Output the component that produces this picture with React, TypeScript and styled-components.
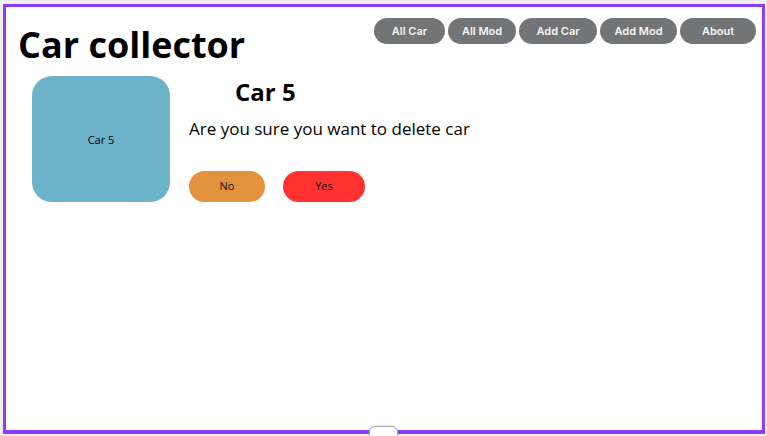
import React from "react";
import styled, { createGlobalStyle } from "styled-components";

const GlobalStyle = createGlobalStyle`
  *, *::before, *::after { box-sizing: border-box; }
  body {
    margin: 0;
    background: #f0f0f3;
    font-family: "Open Sans", "Noto Sans", sans-serif;
    color: #000;
  }
  h1, h2, p { margin: 0; }
`;

const Workspace = styled.div`
  position: relative;
  display: flex;
  min-height: 100vh;
  padding: 4px 2px 2px 3px;
  overflow: hidden;
`;

const Frame = styled.div`
  flex: 1;
  background: #fff;
  border: 3px solid #8b3dff;
  border-bottom-width: 4px;
`;

const Header = styled.header`
  display: flex;
  justify-content: space-between;
  align-items: flex-start;
  padding: 11px 6px 0 12px;
`;

const Title = styled.h1`
  padding-top: 1px;
  font-size: 36px;
  line-height: 52px;
  font-weight: 700;
  white-space: nowrap;
`;

const Nav = styled.nav`
  display: flex;
  gap: 3px;
`;

const NavLink = styled.a<{ $width: number }>`
  display: flex;
  align-items: center;
  justify-content: center;
  width: ${(p) => p.$width}px;
  height: 26px;
  border-radius: 13px;
  background: #737476;
  color: #f4f4f4;
  font-family: Inter, "Noto Sans", sans-serif;
  font-size: 11px;
  font-weight: 600;
  text-decoration: none;
`;

const Main = styled.main`
  display: flex;
  align-items: flex-start;
  gap: 19px;
  padding: 5px 26px 0;
`;

const CarTile = styled.div`
  display: flex;
  align-items: center;
  justify-content: center;
  width: 138px;
  height: 126px;
  border-radius: 20px;
  background: #6cb3ca;
  font-size: 11px;
`;

const Details = styled.section`
  display: flex;
  flex-direction: column;
`;

const CarName = styled.h2`
  padding-left: 46px;
  font-size: 24px;
  line-height: 32px;
  font-weight: 700;
`;

const Question = styled.p`
  padding-top: 8px;
  font-size: 17px;
  line-height: 26px;
`;

const Actions = styled.div`
  display: flex;
  gap: 18px;
  padding-top: 29px;
`;

const ActionButton = styled.button<{ $color: string; $width: number }>`
  width: ${(p) => p.$width}px;
  height: 31px;
  padding: 0 0 2px;
  border: 0;
  border-radius: 16px;
  background: ${(p) => p.$color};
  color: #111;
  font-family: inherit;
  font-size: 11px;
`;

const ResizeHandle = styled.div`
  position: absolute;
  bottom: -4px;
  left: 50%;
  width: 29px;
  height: 14px;
  margin-left: -15px;
  border: 1px solid #a5abb5;
  border-radius: 6px;
  background: #fff;
  box-shadow: 0 0 3px rgba(60, 70, 90, 0.25);
`;

const links = [
  { label: "All Car", width: 71 },
  { label: "All Mod", width: 68 },
  { label: "Add Car", width: 78 },
  { label: "Add Mod", width: 77 },
  { label: "About", width: 76 },
];

export default function App() {
  return (
    <Workspace>
      <GlobalStyle />
      <Frame>
        <Header>
          <Title>Car collector</Title>
          <Nav>
            {links.map((link) => (
              <NavLink key={link.label} href="#" $width={link.width}>
                {link.label}
              </NavLink>
            ))}
          </Nav>
        </Header>
        <Main>
          <CarTile>Car 5</CarTile>
          <Details>
            <CarName>Car 5</CarName>
            <Question>Are you sure you want to delete car</Question>
            <Actions>
              <ActionButton type="button" $color="#e3923d" $width={76}>
                No
              </ActionButton>
              <ActionButton type="button" $color="#ff3131" $width={82}>
                Yes
              </ActionButton>
            </Actions>
          </Details>
        </Main>
      </Frame>
      <ResizeHandle />
    </Workspace>
  );
}
